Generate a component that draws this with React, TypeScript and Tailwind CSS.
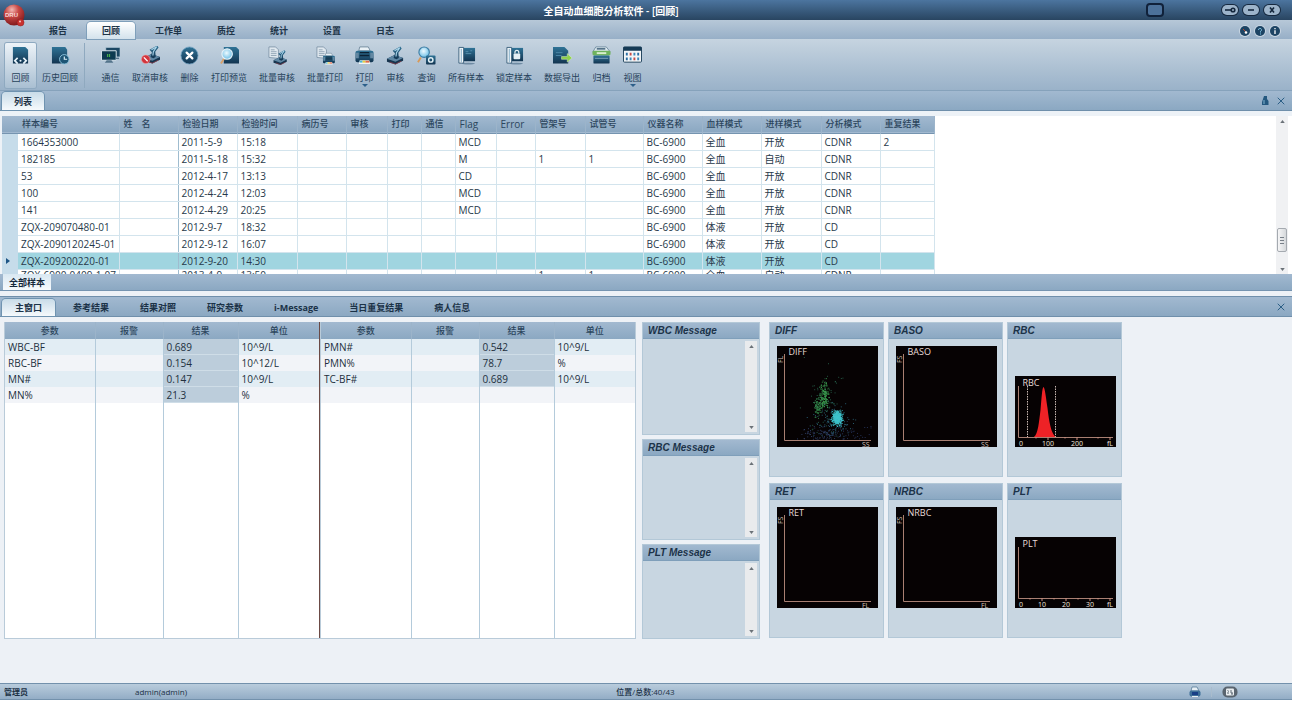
import type { ReactNode } from 'react'
import clsx from 'clsx'
import { X } from 'lucide-react'

const menus = ['报告', '回顾', '工作单', '质控', '统计', '设置', '日志']

const detailTabs = ['主窗口', '参考结果', '结果对照', '研究参数', 'i-Message', '当日重复结果', '病人信息']

const columns = [
  { title: '样本编号', width: 'w-[101px]' },
  { title: '姓　名', width: 'w-[59px]' },
  { title: '检验日期', width: 'w-[59px]' },
  { title: '检验时间', width: 'w-[60px]' },
  { title: '病历号', width: 'w-[49px]' },
  { title: '审核', width: 'w-[41px]' },
  { title: '打印', width: 'w-[34px]' },
  { title: '通信', width: 'w-[34px]' },
  { title: 'Flag', width: 'w-[41px] text-[10px]' },
  { title: 'Error', width: 'w-[39px] text-[10px]' },
  { title: '管架号', width: 'w-[50px]' },
  { title: '试管号', width: 'w-[58px]' },
  { title: '仪器名称', width: 'w-[59px]' },
  { title: '血样模式', width: 'w-[59px]' },
  { title: '进样模式', width: 'w-[60px]' },
  { title: '分析模式', width: 'w-[59px]' },
  { title: '重复结果', width: 'w-[54px]' },
]

interface Sample {
  id: string
  date: string
  time: string
  flag?: string
  rack?: string
  tube?: string
  blood: string
  feed: string
  mode: string
  repeat?: string
}

const samples: Sample[] = [
  { id: '1664353000', date: '2011-5-9', time: '15:18', flag: 'MCD', blood: '全血', feed: '开放', mode: 'CDNR', repeat: '2' },
  { id: '182185', date: '2011-5-18', time: '15:32', flag: 'M', rack: '1', tube: '1', blood: '全血', feed: '自动', mode: 'CDNR' },
  { id: '53', date: '2012-4-17', time: '13:13', flag: 'CD', blood: '全血', feed: '开放', mode: 'CDNR' },
  { id: '100', date: '2012-4-24', time: '12:03', flag: 'MCD', blood: '全血', feed: '开放', mode: 'CDNR' },
  { id: '141', date: '2012-4-29', time: '20:25', flag: 'MCD', blood: '全血', feed: '开放', mode: 'CDNR' },
  { id: 'ZQX-209070480-01', date: '2012-9-7', time: '18:32', blood: '体液', feed: '开放', mode: 'CD' },
  { id: 'ZQX-2090120245-01', date: '2012-9-12', time: '16:07', blood: '体液', feed: '开放', mode: 'CD' },
  { id: 'ZQX-209200220-01', date: '2012-9-20', time: '14:30', blood: '体液', feed: '开放', mode: 'CD' },
  { id: 'ZQX-6900-0409-1-07', date: '2013-4-9', time: '13:50', rack: '1', tube: '1', blood: '全血', feed: '自动', mode: 'CDNR' },
]

const selectedId = 'ZQX-209200220-01'

const leftParams = [
  ['WBC-BF', '0.689', '10^9/L'],
  ['RBC-BF', '0.154', '10^12/L'],
  ['MN#', '0.147', '10^9/L'],
  ['MN%', '21.3', '%'],
]

const rightParams = [
  ['PMN#', '0.542', '10^9/L'],
  ['PMN%', '78.7', '%'],
  ['TC-BF#', '0.689', '10^9/L'],
  ['', '', ''],
]

const bar = 'bg-linear-to-b from-[#a2b9d0] to-[#8ba8c2]'

/* ---------- toolbar icons, drawn on a 20 x 20 grid ---------- */

function Icon({ children }: { children: ReactNode }) {
  return (
    <svg viewBox="0 0 20 20" className="h-[19px] w-[19px] shrink-0" fill="none" aria-hidden="true">
      <defs>
        <linearGradient id="navy" x1="0" y1="0" x2="0" y2="1">
          <stop offset="0" stopColor="#2f7396" />
          <stop offset="1" stopColor="#123450" />
        </linearGradient>
        <radialGradient id="lens" cx="0.45" cy="0.4" r="0.6">
          <stop offset="0" stopColor="#eefaff" />
          <stop offset="1" stopColor="#6dbfe6" />
        </radialGradient>
      </defs>
      {children}
    </svg>
  )
}

const pagePath = 'M2 1h13l3 3v14.500H2z'

function Stamp({ x = 0, y = 0 }) {
  return (
    <g transform={`translate(${x} ${y})`}>
      <path d="M1 13.500l8-4 9 3v3l-8 4-9-3z" fill="#16344e" />
      <path d="M1 13.500l8-4 9 3-8 4z" fill="#5f87a4" />
      <path d="M8 12.500l1.500-5-2.500-2.500 8-4.500 1.500 2-3.500 4.500.5 5.500-2.500 1.500z" fill="url(#navy)" />
      <path d="M9 5l5.500-3.200-3.500 5.200-.5 4" stroke="#a9d3e8" strokeWidth="1.200" />
      <path d="M4 17l6 2 6-3" stroke="#a04048" strokeWidth="0.700" />
    </g>
  )
}

function Sheets() {
  return (
    <>
      <path d="M1 1h7l3 3v9l-10-1z" fill="#dfe8ef" stroke="#6b8398" strokeWidth="0.700" />
      <path d="M3 4h4M3 6h6M3 8h6M3 10h6" stroke="#8197a9" strokeWidth="0.800" />
    </>
  )
}

function Printer({ x = 0, y = 0, scale = 1 }) {
  return (
    <g transform={`translate(${x} ${y}) scale(${scale})`}>
      <path d="M5 1h9l2 4H4z" fill="#e9f1f6" stroke="#506d84" strokeWidth="0.700" />
      <rect x="0.500" y="5" width="19" height="12" rx="2" fill="url(#navy)" />
      <path d="M1 7h3v6H1zM16 7h3v6h-3z" fill="#6388a2" />
      <path d="M5 7h10M5 10h10" stroke="#0c2234" strokeWidth="1.500" />
      <path d="M5 15h10l1 4H4z" fill="#f4f6f4" />
      <path d="M5 16.500h3" stroke="#48b7d8" strokeWidth="2" />
      <path d="M8 16.500h3" stroke="#e6cf3e" strokeWidth="2" />
      <path d="M11 16.500h4" stroke="#e06a4a" strokeWidth="2" />
    </g>
  )
}

function Notebook() {
  return (
    <>
      <ellipse cx="12" cy="18.500" rx="7" ry="1" fill="#6f8ba3" />
      <path d="M6 2h13v14H6z" fill="url(#navy)" />
      <path d="M2 1.500h5V18H2z" fill="#f2f7fa" stroke="#3d627d" />
      <path d="M4.500 3v14" stroke="#7ba9c4" />
    </>
  )
}

const tools: { label: string; icon: ReactNode; more?: boolean; split?: boolean }[] = [
  {
    label: '回顾',
    icon: (
      <>
        <path d={pagePath} fill="url(#navy)" />
        <path d="M7 12.500L4 15.500l3 3M13 12.500l3 3-3 3" stroke="#e8f4fb" strokeWidth="1.800" />
        <circle cx="10" cy="15.500" r="1.100" fill="#e8f4fb" />
      </>
    ),
  },
  {
    label: '历史回顾',
    split: true,
    icon: (
      <>
        <path d="M1 1h14l2 3v14.500H1z" fill="url(#navy)" />
        <circle cx="14" cy="14" r="5" fill="#1d5575" stroke="#8cc4de" />
        <path d="M14 11v3h3" stroke="#dff3fb" strokeWidth="1.200" />
      </>
    ),
  },
  {
    label: '通信',
    icon: (
      <>
        <path d="M5 1.500h15v10H5z" fill="#1c4763" stroke="#c8dbe7" strokeWidth="0.600" />
        <path d="M.500 5h15.500v10H.500z" fill="#0d3a50" stroke="#dce8ef" />
        <path d="M7 8.500v3M9 8.500v3" stroke="#49b34a" strokeWidth="1.200" />
        <path d="M6 15h5l2 2.500H4z" fill="#53738a" />
        <path d="M15 13h4" stroke="#53738a" strokeWidth="1.500" />
      </>
    ),
  },
  {
    label: '取消审核',
    icon: (
      <>
        <Stamp x={2} y={-1} />
        <circle cx="5" cy="14" r="4.500" fill="#d2343c" stroke="#f0a0a0" strokeWidth="0.600" />
        <path d="M3 12l4 4" stroke="#fff" strokeWidth="1.300" />
      </>
    ),
  },
  {
    label: '删除',
    icon: (
      <>
        <circle cx="10" cy="10" r="9" fill="url(#navy)" stroke="#6ea0bf" strokeWidth="0.800" />
        <path d="M7 7l6 6M13 7l-6 6" stroke="#fff" strokeWidth="2.400" strokeLinecap="round" />
      </>
    ),
  },
  {
    label: '打印预览',
    icon: (
      <>
        <path d="M4 1h13l3 3v14.500H4z" fill="url(#navy)" />
        <path d="M4.500 13L1 18.500" stroke="#d8a06a" strokeWidth="2" />
        <circle cx="7.500" cy="8.500" r="5.500" fill="url(#lens)" stroke="#e6f3fa" strokeWidth="1.200" />
      </>
    ),
  },
  {
    label: '批量审核',
    icon: (
      <>
        <Sheets />
        <g transform="translate(5 4) scale(0.82)">
          <Stamp />
        </g>
      </>
    ),
  },
  {
    label: '批量打印',
    icon: (
      <>
        <Sheets />
        <Printer x={7} y={7} scale={0.66} />
      </>
    ),
  },
  { label: '打印', more: true, icon: <Printer /> },
  { label: '审核', icon: <Stamp /> },
  {
    label: '查询',
    icon: (
      <>
        <path d="M4 12l-3 5" stroke="#d89a5a" strokeWidth="2" />
        <circle cx="7.500" cy="6.500" r="5.500" fill="url(#lens)" stroke="#3f7fa5" strokeWidth="1.200" />
        <rect x="9.500" y="10" width="10" height="9.500" rx="1" fill="url(#navy)" />
        <circle cx="14.500" cy="14.700" r="2.300" stroke="#e4f2f8" strokeWidth="1.500" />
      </>
    ),
  },
  {
    label: '所有样本',
    icon: (
      <>
        <Notebook />
        <path d="M9 6h3M9 8h6M14 5h2" stroke="#5c93b2" strokeWidth="0.900" />
      </>
    ),
  },
  {
    label: '锁定样本',
    icon: (
      <>
        <Notebook />
        <rect x="9" y="8" width="7" height="6" rx="1" fill="#e4eef4" />
        <path d="M10.500 8V6.500a2 2 0 0 1 4 0V8" stroke="#e4eef4" strokeWidth="1.300" />
      </>
    ),
  },
  {
    label: '数据导出',
    icon: (
      <>
        <path d="M0 1h12l4 4v13.500H0z" fill="url(#navy)" />
        <path d="M3 7h7M3 10h6" stroke="#4c87a6" />
        <path d="M9 11h6V8l5 4.500-5 4.500v-3H9z" fill="#8ed04b" stroke="#e2f5cf" strokeWidth="0.500" />
      </>
    ),
  },
  {
    label: '归档',
    icon: (
      <>
        <path d="M4 1h11l4 5H1z" fill="#dce9ef" stroke="#51718a" strokeWidth="0.700" />
        <path d="M5 3h9" stroke="#3f6079" strokeWidth="1.500" />
        <rect x="0.500" y="5" width="19" height="5" rx="1.500" fill="#6fb35d" />
        <rect x="5" y="6.500" width="10" height="2" fill="#d9efcf" />
        <rect x="1.500" y="10" width="17" height="8.500" rx="1" fill="url(#navy)" />
        <path d="M3 13h14" stroke="#7ba0b8" />
      </>
    ),
  },
  {
    label: '视图',
    more: true,
    icon: (
      <>
        <rect x="0.500" y="1" width="19" height="16" rx="1" fill="#f3f6f8" stroke="#1a3e59" />
        <rect x="0.500" y="1" width="19" height="4" fill="#153a55" />
        <path d="M4 7v3M4 12v3M16 7v3" stroke="#2a6da3" strokeWidth="2" />
        <path d="M8 7v3M12 12v3" stroke="#c84a45" strokeWidth="2" />
        <path d="M12 7v3M8 12v3M16 12v3" stroke="#3c88b8" strokeWidth="2" />
      </>
    ),
  },
]

/* ---------- shell ---------- */

function Logo() {
  return (
    <svg viewBox="0 0 24 24" className="absolute left-0.5 top-1 z-10 h-6 w-6" aria-hidden="true">
      <defs>
        <radialGradient id="ball" cx="0.4" cy="0.25" r="0.8">
          <stop offset="0" stopColor="#f3b9b4" />
          <stop offset="0.400" stopColor="#c94844" />
          <stop offset="1" stopColor="#7a1518" />
        </radialGradient>
      </defs>
      <circle cx="12" cy="11" r="10.500" fill="url(#ball)" />
      <circle cx="18.500" cy="18.500" r="3.500" fill="#c9322f" stroke="#8c1a1c" strokeWidth="0.500" />
      <circle cx="18" cy="17.500" r="1" fill="#f7c7c2" />
      <text x="3" y="13" fontSize="6" fontWeight="700" fill="#f7dcda" fontFamily="Liberation Sans">
        DRU
      </text>
    </svg>
  )
}

function WindowButton({ label, children }: { label: string; children: ReactNode }) {
  return (
    <button
      type="button"
      aria-label={label}
      className="flex h-2.5 w-4 items-center justify-center rounded-full bg-[#9db4ca] ring-1 ring-[#16293f]"
    >
      <svg viewBox="0 0 12 8" className="h-2 w-3" stroke="#14273c" strokeWidth="1.600" fill="none">
        {children}
      </svg>
    </button>
  )
}

function TitleBar() {
  return (
    <header className="relative flex h-5 items-center bg-linear-to-b from-[#4c759f] to-[#294561]">
      <Logo />
      <h1 className="min-w-0 flex-1 pl-[76px] pt-0.5 text-center text-[10px] font-semibold leading-4 text-white">
        全自动血细胞分析软件 - [回顾]
      </h1>
      <button
        type="button"
        aria-label="面板"
        className="mr-[58px] h-3.5 w-[18px] rounded-sm border-2 border-[#10213a] bg-[#4c719a]"
      />
      <div className="flex gap-[5px] pr-3">
        <WindowButton label="锁定">
          <path d="M1 4h6" />
          <circle cx="9" cy="4" r="1.800" />
        </WindowButton>
        <WindowButton label="最小化">
          <path d="M3 4h6" />
        </WindowButton>
        <WindowButton label="关闭">
          <path d="M4 1.500l4 5M8 1.500l-4 5" />
        </WindowButton>
      </div>
    </header>
  )
}

function RoundButton({ label, children }: { label: string; children: ReactNode }) {
  return (
    <button type="button" aria-label={label} className="h-2.5 w-2.5 rounded-full ring-1 ring-[#c9d6e2]">
      <svg viewBox="0 0 10 10" className="h-2.5 w-2.5" fill="none">
        <circle cx="5" cy="5" r="5" fill="#1d4464" />
        {children}
      </svg>
    </button>
  )
}

function MenuBar() {
  return (
    <nav className="flex h-[19px] items-end bg-linear-to-b from-[#b7c8d8] to-[#97afc7] pl-[34px] pr-3">
      <div className="flex flex-1 gap-[5px]">
        {menus.map((name) => (
          <button
            key={name}
            type="button"
            className={clsx(
              'h-[17px] rounded-t px-[15px] pt-px text-[9px] font-semibold leading-4 text-[#1d3448]',
              name === '回顾' && 'bg-linear-to-b from-white to-[#d3e2ec] ring-1 ring-[#7f9fba]',
            )}
          >
            {name}
          </button>
        ))}
      </div>
      <div className="mb-[3px] flex gap-[5px]">
        <RoundButton label="用户">
          <path d="M3 3l4 4" stroke="#b7482e" />
          <circle cx="6" cy="6.500" r="1.300" fill="#fff" />
        </RoundButton>
        <RoundButton label="帮助">
          <path d="M3.500 4a1.500 1.500 0 1 1 2 1.300V6.500M5.500 7.500v1" stroke="#7fc0e0" />
        </RoundButton>
        <RoundButton label="关于">
          <path d="M5 2v1.200M5 4.200V8" stroke="#fff" strokeWidth="1.300" />
        </RoundButton>
      </div>
    </nav>
  )
}

function Toolbar() {
  return (
    <div className="flex h-[52px] items-start border-b border-[#86a2bb] bg-linear-to-b from-[#c6d4e0] to-[#9ab2c9] pl-[5px] pt-1">
      {tools.map((tool, i) => (
        <div key={tool.label} className="flex">
          <button
            type="button"
            className={clsx(
              'flex h-[45px] flex-col items-center rounded-xs px-[6px] pt-[3px] text-[9px] leading-4 text-[#26425a]',
              i === 0 && 'bg-linear-to-b from-[#edf3f8] to-[#a9bfd2] ring-1 ring-[#8ea9c0]',
            )}
          >
            <Icon>{tool.icon}</Icon>
            <span className="mt-[5px] whitespace-nowrap">{tool.label}</span>
            {tool.more ? (
              <svg viewBox="0 0 6 3" className="-mt-0.5 h-[3px] w-1.5 shrink-0" aria-hidden="true">
                <path d="M0 0h6L3 3z" fill="#2c5f8a" />
              </svg>
            ) : null}
          </button>
          {tool.split ? <span className="mr-2.5 h-[45px] border-l border-[#8fa9bf]" /> : null}
        </div>
      ))}
    </div>
  )
}

const activeTab = 'rounded-t bg-linear-to-b from-[#c9dce8] to-[#f5f9fc] ring-1 ring-[#6f93b0]'

function CloseButton() {
  return (
    <button type="button" aria-label="关闭面板" className="text-[#2b5f86]">
      <X className="h-3 w-3" />
    </button>
  )
}

function Arrow({ up, label }: { up?: boolean; label: string }) {
  return (
    <button type="button" aria-label={label} className="flex h-2.5 w-full items-center justify-center">
      <svg viewBox="0 0 6 4" className="h-[3px] w-[5px]" fill="#6b7278">
        <path d={up ? 'M0 4h6L3 0z' : 'M0 0h6L3 4z'} />
      </svg>
    </button>
  )
}

/* ---------- sample list ---------- */

function SampleTable() {
  return (
    <table className="w-[932px] shrink-0 table-fixed border-collapse self-start text-left">
      <thead>
        <tr className={clsx('h-[17px] border-b border-[#7594b0] text-[9px] text-[#2c465d]', bar)}>
          <th className="w-4" />
          {columns.map((col) => (
            <th
              key={col.title}
              className={clsx(
                'overflow-hidden whitespace-nowrap border-r border-[#9cb4ca] p-0 pl-1 font-medium leading-4',
                col.width,
              )}
            >
              {col.title}
            </th>
          ))}
        </tr>
      </thead>
      <tbody>
        {samples.map((s) => {
          const selected = s.id === selectedId
          const cells = [
            s.id, '', s.date, s.time, '', '', '', '', s.flag, '', s.rack, s.tube,
            'BC-6900', s.blood, s.feed, s.mode, s.repeat,
          ]
          return (
            <tr
              key={s.id}
              className={clsx(
                'h-[17px] text-[10px] leading-4 text-[#27394a] last:align-top last:leading-[10px]',
                selected && 'bg-[#a0d5e0]',
              )}
            >
              <td className="bg-[#c6dcea] p-0">
                {selected ? (
                  <svg viewBox="0 0 4 6" className="ml-1 h-1.5 w-1" aria-hidden="true">
                    <path d="M0 0l4 3-4 3z" fill="#1c5485" />
                  </svg>
                ) : null}
              </td>
              {cells.map((value, i) => (
                <td
                  key={i}
                  className={clsx(
                    'overflow-hidden whitespace-nowrap border-b border-r border-[#d3e4ed] p-0 pl-[3px]',
                    i === 1 && 'border-r-[#9fbccf]',
                  )}
                >
                  {value}
                </td>
              ))}
            </tr>
          )
        })}
      </tbody>
    </table>
  )
}

function SampleList() {
  return (
    <section>
      <div className={clsx('flex h-5 items-end border-b border-[#6f8fab] pl-0.5 pr-[5px]', bar)}>
        <button type="button" className={clsx('h-[18px] px-3 pt-0.5 text-[9px] font-bold leading-4 text-[#1b2f42]', activeTab)}>
          列表
        </button>
        <div className="mb-[3px] ml-auto flex items-center gap-1.5">
          <button type="button" aria-label="固定">
            <svg viewBox="0 0 8 10" className="h-2.5 w-2" aria-hidden="true">
              <path d="M3 0h3v3l1.500 2v4H1V6z" fill="#24587f" />
              <path d="M3 4v4" stroke="#7fb2d0" />
            </svg>
          </button>
          <CloseButton />
        </div>
      </div>
      <div className="bg-[#edf2f7] pl-0.5 pt-[5px]">
        <div className="flex h-[158px] overflow-hidden bg-white">
          <SampleTable />
          <div className="ml-auto mr-1 flex w-3 flex-col bg-[#f0f1f3]">
            <Arrow up label="向上滚动" />
            <div className="flex-1" />
            <div className="mx-px mb-3 flex h-6 flex-col justify-center gap-0.5 rounded-xs border border-[#a5aab0] bg-linear-to-r from-[#f6f6f7] to-[#d5d8db] px-0.5">
              <span className="h-px bg-[#777f88]" />
              <span className="h-px bg-[#777f88]" />
              <span className="h-px bg-[#777f88]" />
            </div>
            <Arrow label="向下滚动" />
          </div>
        </div>
      </div>
      <div className={clsx('flex h-[17px] border-b border-[#7594b0] pl-[3px]', bar)}>
        <button type="button" className="h-4 bg-linear-to-b from-[#d9e8f2] to-[#f7fafc] px-1.5 pt-px text-[9px] font-bold leading-[14px] text-[#16283a]">
          全部样本
        </button>
      </div>
    </section>
  )
}

/* ---------- detail ---------- */

function ParamTable({ rows }: { rows: string[][] }) {
  return (
    <table className="h-[316px] w-[314px] table-fixed border-collapse bg-white text-[10px] text-[#22303d]">
      <thead>
        <tr className={clsx('h-[17px] text-[9px] text-[#2c465d]', bar)}>
          <th className="w-[90px] border-r border-[#9cb4ca] p-0 font-medium leading-4">参数</th>
          <th className="w-[68px] border-r border-[#9cb4ca] p-0 font-medium leading-4">报警</th>
          <th className="w-[75px] border-r border-[#9cb4ca] p-0 font-medium leading-4">结果</th>
          <th className="p-0 font-medium leading-4">单位</th>
        </tr>
      </thead>
      <tbody>
        {rows.map(([name, value, unit], i) => (
          <tr key={i} className={clsx('h-4', i % 2 ? 'bg-[#f2f4f8]' : 'bg-[#e2edf4]')}>
            <td className="border-r border-[#b4cbdb] p-0 pl-[3px] leading-4">{name}</td>
            <td className="border-r border-[#b4cbdb] p-0" />
            <td className={clsx('border-r border-[#b4cbdb] p-0 pl-[3px] leading-4', value && 'bg-[#bccddb] shadow-[inset_0_-1px_#cfdde7]')}>
              {value}
            </td>
            <td className="p-0 pl-[3px] leading-4">{unit}</td>
          </tr>
        ))}
        <tr>
          <td className="border-r border-[#b4cbdb]" />
          <td className="border-r border-[#b4cbdb]" />
          <td className="border-r border-[#b4cbdb]" />
          <td />
        </tr>
      </tbody>
    </table>
  )
}

function Panel({ title, className, children }: { title: string; className?: string; children: ReactNode }) {
  return (
    <section className={clsx('flex flex-col border border-[#b3c8d7] bg-[#c8d6e1]', className)}>
      <h2 className={clsx("h-4 shrink-0 border-b border-[#7f9fba] pl-[5px] font-['Liberation_Sans',sans-serif] text-[10px] font-bold italic leading-4 text-[#1c3349]", bar)}>
        {title}
      </h2>
      {children}
    </section>
  )
}

function MessagePanel({ title, className }: { title: string; className: string }) {
  return (
    <Panel title={title} className={className}>
      <div className="my-0.5 ml-auto mr-0.5 flex w-3 flex-1 flex-col justify-between bg-[#e9ebed]">
        <Arrow up label={`${title} 向上滚动`} />
        <Arrow label={`${title} 向下滚动`} />
      </div>
    </Panel>
  )
}

// Fixed-seed generator so the scatter looks the same on every render
function makeRandom(seed: number) {
  let s = seed
  return () => {
    s = (s * 16807) % 2147483647
    return s / 2147483647
  }
}

function cluster(seed: number, count: number, cx: number, cy: number, sx: number, sy: number) {
  const rnd = makeRandom(seed)
  const spread = () => rnd() + rnd() + rnd() - 1.5
  return Array.from({ length: count }, () => [cx + spread() * sx, cy + spread() * sy])
}

const diffClusters = [
  { color: '#2a6a52', points: cluster(11, 90, 46, 56, 16, 34) },
  { color: '#3c9c50', points: cluster(23, 170, 47, 49, 4, 13) },
  { color: '#348a4c', points: cluster(37, 90, 41, 60, 4, 9) },
  { color: '#2f6f86', points: cluster(41, 110, 56, 76, 20, 16) },
  { color: '#3fc4cc', points: cluster(53, 460, 60, 72, 5, 7) },
  { color: '#34446e', points: cluster(67, 110, 48, 88, 26, 7) },
  { color: '#2b3b66', points: cluster(79, 40, 74, 85, 26, 12) },
]

const plotFont = "'Open Sans', sans-serif"

function ScatterPlot({ name, x, y, dots }: { name: string; x: string; y: string; dots?: boolean }) {
  return (
    <svg viewBox="0 0 101 101" className="ml-[7px] mt-[7px] h-[101px] w-[101px] bg-[#060203]" fontFamily={plotFont}>
      {dots
        ? diffClusters.map((c) => (
            <g key={c.color} fill={c.color}>
              {c.points
                .filter((p) => p[1] < 93)
                .map((p, i) => (
                  <rect key={i} x={p[0]} y={p[1]} width="0.900" height="0.900" />
                ))}
            </g>
          ))
        : null}
      <path d="M7.500 8v86.500H94" stroke="#a87f72" fill="none" />
      <text x="11.500" y="8.500" fontSize="9" fill="#e6dcd8">{name}</text>
      <text x="-17" y="6" fontSize="7" fill="#d6c3bc" transform="rotate(-90)">{y}</text>
      <text x="85" y="100.500" fontSize="7" fill="#d6c3bc">{x}</text>
    </svg>
  )
}

function Histogram({ name, ticks, peak }: { name: string; ticks: [string, number][]; peak?: boolean }) {
  return (
    <svg viewBox="0 0 101 71" className="ml-[7px] mt-[37px] h-[71px] w-[101px] bg-[#060203]" fontFamily={plotFont}>
      {peak ? (
        <>
          <path d="M19 61C23 58 24 46 25.500 34C26.500 24 27 12 28.500 11C30 12 31 22 32.500 32C34 45 36 58 41 61z" fill="#ee2226" />
          <path d="M12.500 10v51M40.500 10v51" stroke="#c9b9b2" strokeDasharray="1.500 1" />
        </>
      ) : null}
      <path d="M3.500 10v51.500H98" stroke="#a87f72" fill="none" />
      {ticks.map(([label, x], i) => (
        <g key={label}>
          {i > 0 ? <path d={`M${x} 61v3M${x - 12} 61v1.500`} stroke="#c98f80" /> : null}
          <text x={x} y="69.500" fontSize="7" fill="#eee2dd" textAnchor="middle">{label}</text>
        </g>
      ))}
      <text x="7.500" y="10" fontSize="9" fill="#e6dcd8">{name}</text>
    </svg>
  )
}

function Detail() {
  return (
    <section className="mt-[5px]">
      <div className={clsx('flex h-[21px] items-end gap-[5px] border-b border-t border-[#6f8fab] pl-0.5 pr-[5px]', bar)}>
        {detailTabs.map((name, i) => (
          <button
            key={name}
            type="button"
            className={clsx(
              'h-[17px] whitespace-nowrap px-[13px] pt-px text-[9px] font-bold leading-4 text-[#1b3247]',
              i === 0 && activeTab,
            )}
          >
            {name}
          </button>
        ))}
        <div className="mb-[3px] ml-auto flex">
          <CloseButton />
        </div>
      </div>
      <div className="flex items-start pb-11 pl-1 pt-[5px]">
        <div className="flex shrink-0 border border-t-0 border-[#b9cbd9]">
          <ParamTable rows={leftParams} />
          <span className="w-0.5 border-l border-[#6b4a45] bg-[#b9cbd9]" />
          <ParamTable rows={rightParams} />
        </div>
        <div className="ml-1.5 flex w-[118px] shrink-0 flex-col gap-1">
          <MessagePanel title="WBC Message" className="h-[113px]" />
          <MessagePanel title="RBC Message" className="h-[101px]" />
          <MessagePanel title="PLT Message" className="h-[95px]" />
        </div>
        <div className="ml-[9px] grid grid-cols-[repeat(3,115px)] gap-x-1 gap-y-1.5">
          <Panel title="DIFF" className="h-[155px]">
            <ScatterPlot name="DIFF" x="SS" y="FL" dots />
          </Panel>
          <Panel title="BASO" className="h-[155px]">
            <ScatterPlot name="BASO" x="SS" y="FS" />
          </Panel>
          <Panel title="RBC" className="h-[155px]">
            <Histogram name="RBC" peak ticks={[['0', 6], ['100', 33], ['200', 62], ['fL', 95]]} />
          </Panel>
          <Panel title="RET" className="h-[155px]">
            <ScatterPlot name="RET" x="FL" y="FS" />
          </Panel>
          <Panel title="NRBC" className="h-[155px]">
            <ScatterPlot name="NRBC" x="FL" y="FS" />
          </Panel>
          <Panel title="PLT" className="h-[155px]">
            <Histogram name="PLT" ticks={[['0', 6], ['10', 27], ['20', 51], ['30', 75], ['fL', 95]]} />
          </Panel>
        </div>
      </div>
    </section>
  )
}

function StatusBar() {
  return (
    <footer className="flex h-[17px] items-center border-b border-t border-[#7391ac] bg-linear-to-b from-[#b9ccdc] to-[#93adc6] pl-1 text-[8px] font-medium leading-[14px] text-[#1c3145]">
      <span className="w-[131px] font-semibold">管理员</span>
      <span className="flex-5">admin(admin)</span>
      <span className="flex-6 pl-1">位置/总数:40/43</span>
      <div className="mr-[54px] flex items-center gap-2.5">
        <svg viewBox="0 0 12 12" className="h-3 w-3" aria-hidden="true">
          <path d="M3 1h5l2 4H2z" fill="#e5eef4" stroke="#47708f" strokeWidth="0.700" />
          <rect x="0.500" y="4.500" width="11" height="6" rx="2" fill="#3d6f98" />
          <rect x="3" y="6" width="6" height="3" fill="#183f86" />
          <path d="M3 10.500h6" stroke="#e7edf1" />
        </svg>
        <span className="h-2.5 border-l border-[#a9bccd]" />
        <svg viewBox="0 0 16 12" className="h-3 w-4" aria-hidden="true">
          <rect x="0.500" y="0.500" width="15" height="11" rx="5" fill="#59646f" />
          <rect x="4" y="2.500" width="8" height="7" rx="1" fill="#e9edf0" />
          <path d="M5.500 4.500l1.500 1M6 6v2M9 4v3h2M9 8h2" stroke="#5c6873" fill="none" />
        </svg>
      </div>
    </footer>
  )
}

export default function App() {
  return (
    <div className="bg-[#edf1f6] font-['Open_Sans','Noto_Sans_CJK_SC',sans-serif]">
      <TitleBar />
      <MenuBar />
      <Toolbar />
      <SampleList />
      <Detail />
      <StatusBar />
    </div>
  )
}
